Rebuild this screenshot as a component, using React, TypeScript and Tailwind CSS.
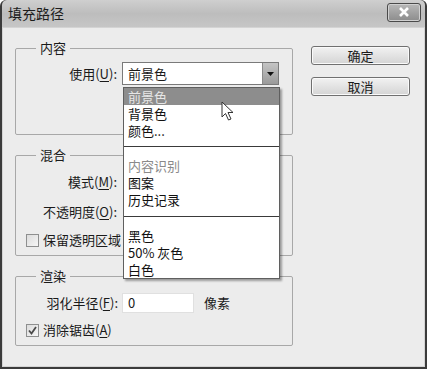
const font = { fontFamily: '"Noto Sans CJK SC", "Noto Sans", sans-serif' };

function U({ children }: { children: string }) {
  return <span className="underline underline-offset-2">{children}</span>;
}

function Checkbox({ checked }: { checked?: boolean }) {
  return (
    <span className="flex h-[13px] w-[13px] items-center justify-center border border-[#8e8f8f] bg-gradient-to-br from-[#dcdcdc] to-[#f6f6f6]">
      {checked && (
        <svg width="11" height="11" viewBox="0 0 11 11">
          <path d="M2 5.5 L4.5 8.5 L9 2" fill="none" stroke="#4a4a4a" strokeWidth="1.8" />
        </svg>
      )}
    </span>
  );
}

function Button({ label }: { label: string }) {
  return (
    <button className="h-[19px] w-[99px] rounded-[3px] border border-[#707070] bg-gradient-to-b from-[#f2f2f2] to-[#d4d4d4] text-[13px] leading-none text-[#1a1a1a] shadow-[inset_0_0_0_1px_#fafafa]">
      {label}
    </button>
  );
}

const menu = [
  ['前景色', '背景色', '颜色...'],
  ['内容识别', '图案', '历史记录'],
  ['黑色', '50% 灰色', '白色'],
];

function Dropdown() {
  return (
    <div className="absolute left-0 top-[24px] z-10 w-[157px] border border-[#5f5f5f] bg-white shadow-[2px_2px_2px_rgba(0,0,0,0.35)]">
      {menu.map((group, gi) => (
        <div key={gi}>
          {gi > 0 && <div className={`h-px bg-[#3a3a3a] ${gi === 1 ? 'mb-[10px] mt-[7px]' : 'mb-[10px] mt-[8px]'}`} />}
          {group.map((item, i) => {
            const active = gi === 0 && i === 0;
            const disabled = gi === 1 && i === 0;
            return (
              <div
                key={item}
                className={`h-[17px] pl-[4px] text-[13px] leading-[17px] ${
                  active ? 'bg-[#8d8d8d] text-[#e6e6e6]' : disabled ? 'text-[#8a8a8a]' : 'text-[#111]'
                }`}
              >
                {item}
              </div>
            );
          })}
        </div>
      ))}
      <svg className="absolute left-[97px] top-[13px]" width="14" height="20" viewBox="0 0 14 20">
        <path d="M1 1 L1 16 L4.5 12.5 L7.5 19 L10 18 L7 11.5 L12 11.5 Z" fill="white" stroke="#333" strokeWidth="1" />
      </svg>
    </div>
  );
}

export default function App() {
  return (
    <div className="h-[369px] w-[427px] overflow-hidden rounded-t-[6px] bg-[#3b3b3b] px-[2px] pb-[2px]" style={font}>
      {/* title bar */}
      <div className="flex h-[27px] items-center justify-between rounded-t-[5px] bg-gradient-to-b from-[#cfcfcf] via-[#bdbdbd] to-[#c6c6c6] pl-[6px] pr-[4px]">
        <span className="text-[14px] text-[#1c1c1c]">填充路径</span>
        <span className="mb-[3px] flex h-[19px] w-[34px] items-center justify-center rounded-[3px] border border-[#4a4a4a] bg-gradient-to-b from-[#b8b8b8] to-[#8c8c8c] shadow-[inset_0_0_0_1px_#d0d0d0]">
          <svg width="12" height="10" viewBox="0 0 12 10">
            <path d="M2 1 L10 9 M10 1 L2 9" stroke="white" strokeWidth="2.6" />
          </svg>
        </span>
      </div>

      {/* body */}
      <div className="flex h-[340px] border border-[#d4d4d4] bg-[#ececec] pl-[12px] pt-[12px] text-[13px] text-[#1a1a1a]">
        <div className="flex w-[278px] flex-col">
          <fieldset className="h-[95px] rounded-[2px] border border-[#a8a8a8]">
            <legend className="ml-[20px] px-[4px] leading-[16px]">内容</legend>
            <div className="mt-[6px] flex h-[23px] items-center">
              <span className="w-[101px] text-right">
                使用(<U>U</U>):
              </span>
              <div className="relative ml-[5px] flex h-[23px] w-[157px] items-center border border-[#7a7a7a] bg-white">
                <span className="flex-1 pl-[5px]">前景色</span>
                <span className="flex h-full w-[16px] items-center justify-center border-l border-[#8a8a8a] bg-gradient-to-b from-[#c4c4c4] to-[#9a9a9a]">
                  <svg width="7" height="4" viewBox="0 0 7 4">
                    <path d="M0 0 L7 0 L3.5 4 Z" fill="#111" />
                  </svg>
                </span>
                <Dropdown />
              </div>
            </div>
          </fieldset>

          <fieldset className="mt-[12px] h-[109px] rounded-[2px] border border-[#a8a8a8]">
            <legend className="ml-[20px] px-[4px] leading-[16px]">混合</legend>
            <div className="mt-[8px] flex h-[22px] items-center">
              <span className="w-[101px] text-right">
                模式(<U>M</U>):
              </span>
            </div>
            <div className="mt-[8px] flex h-[22px] items-center">
              <span className="w-[101px] text-right">
                不透明度(<U>O</U>):
              </span>
            </div>
            <div className="ml-[10px] mt-[9px] flex h-[16px] items-center gap-[4px]">
              <Checkbox />
              <span>保留透明区域</span>
            </div>
          </fieldset>

          <fieldset className="mt-[12px] h-[78px] rounded-[2px] border border-[#a8a8a8]">
            <legend className="ml-[20px] px-[4px] leading-[16px]">渲染</legend>
            <div className="mt-[9px] flex h-[20px] items-center">
              <span className="w-[102px] text-right">
                羽化半径(<U>F</U>):
              </span>
              <span className="ml-[4px] flex h-[20px] w-[72px] items-center border border-[#e0e0e0] bg-white pl-[5px]">0</span>
              <span className="ml-[10px]">像素</span>
            </div>
            <div className="ml-[10px] mt-[9px] flex h-[16px] items-center gap-[4px]">
              <Checkbox checked />
              <span>
                消除锯齿(<U>A</U>)
              </span>
            </div>
          </fieldset>
        </div>

        <div className="ml-[18px] mt-[6px] flex flex-col gap-[12px]">
          <Button label="确定" />
          <Button label="取消" />
        </div>
      </div>
    </div>
  );
}
